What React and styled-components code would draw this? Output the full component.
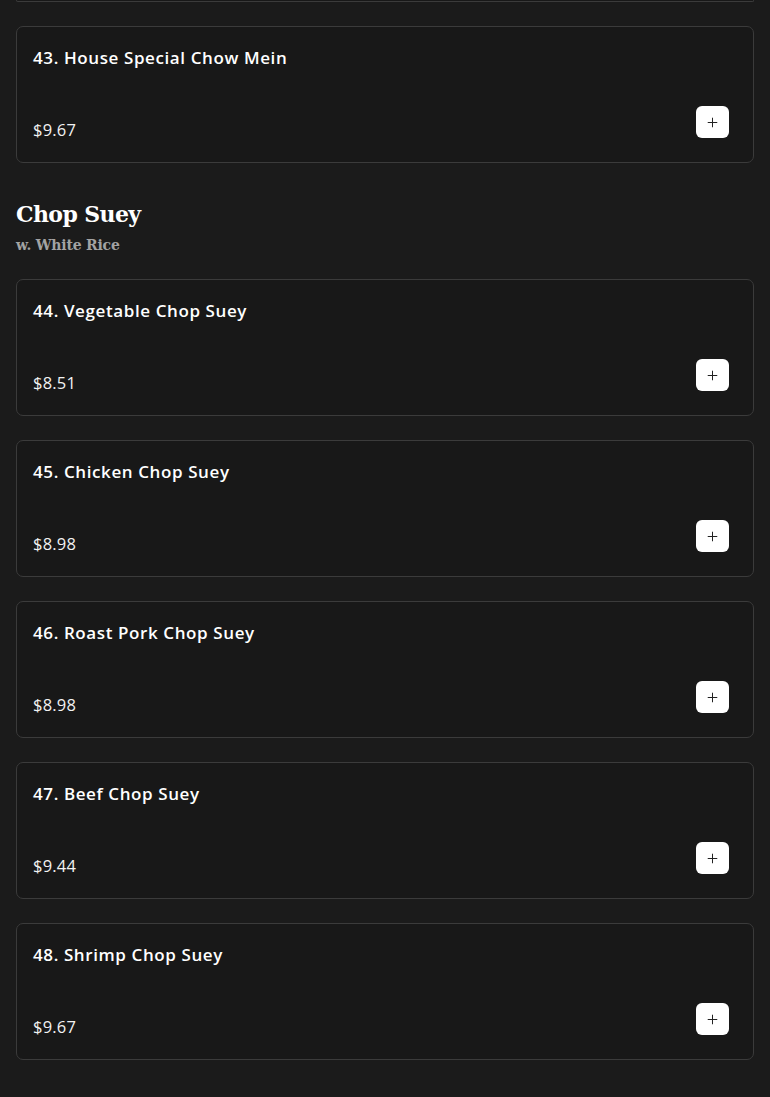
import React from "react";
import styled, { createGlobalStyle } from "styled-components";
import { Plus } from "lucide-react";

const Global = createGlobalStyle`
  html, body { margin: 0; padding: 0; background: #1b1b1b; }
  body { font-family: "Open Sans", "Liberation Sans", sans-serif; color: #fff; overflow: hidden; }
`;

const Page = styled.div`
  padding: 0 16px 40px;
`;

const List = styled.div`
  display: flex;
  flex-direction: column;
  gap: 24px;
`;

const Section = styled.section`
  margin-top: ${(p) => p.$gap || 0}px;
`;

const Header = styled.header`
  margin-bottom: 24px;
`;

const Heading = styled.h2`
  margin: 0;
  font-family: "DejaVu Serif", "Liberation Serif", serif;
  font-weight: 700;
  font-size: 22px;
  line-height: 30px;
  letter-spacing: -0.6px;
  color: #fff;
`;

const Sub = styled.div`
  margin-top: 6px;
  font-family: "DejaVu Serif", "Liberation Serif", serif;
  font-weight: 700;
  font-size: 14px;
  line-height: 20px;
  letter-spacing: -0.2px;
  color: #a3a3a3;
`;

const CardTail = styled.div`
  box-sizing: border-box;
  height: 2px;
  border: 1px solid #3b3b3b;
  border-top: none;
  border-radius: 0 0 7px 7px;
  background: #181818;
`;

const Card = styled.div`
  box-sizing: border-box;
  height: 137px;
  display: flex;
  flex-direction: column;
  justify-content: space-between;
  padding: 16px 24px 24px 16px;
  background: #181818;
  border: 1px solid #3b3b3b;
  border-radius: 7px;
`;

const Title = styled.div`
  font-size: 17px;
  font-weight: 600;
  line-height: 30px;
  letter-spacing: 0.6px;
  color: #fff;
`;

const Bottom = styled.div`
  display: flex;
  justify-content: space-between;
  align-items: flex-end;
`;

const Price = styled.div`
  font-size: 16.5px;
  line-height: 16px;
  letter-spacing: 0.2px;
  color: #f2f2f2;
`;

const AddButton = styled.button`
  width: 33px;
  height: 32px;
  border: none;
  border-radius: 6px;
  background: #fff;
  color: #222;
  display: flex;
  align-items: center;
  justify-content: center;
  padding: 0;
  cursor: pointer;
`;

const Item = ({ name, price }) => (
  <Card>
    <Title>{name}</Title>
    <Bottom>
      <Price>{price}</Price>
      <AddButton aria-label="Add">
        <Plus size={15} strokeWidth={1.6} />
      </AddButton>
    </Bottom>
  </Card>
);

const chowMein = [{ name: "43. House Special Chow Mein", price: "$9.67" }];

const chopSuey = [
  { name: "44. Vegetable Chop Suey", price: "$8.51" },
  { name: "45. Chicken Chop Suey", price: "$8.98" },
  { name: "46. Roast Pork Chop Suey", price: "$8.98" },
  { name: "47. Beef Chop Suey", price: "$9.44" },
  { name: "48. Shrimp Chop Suey", price: "$9.67" },
];

export default function App() {
  return (
    <>
      <Global />
      <Page>
        <Section>
          <List>
            <CardTail />
            {chowMein.map((i) => (
              <Item key={i.name} {...i} />
            ))}
          </List>
        </Section>
        <Section $gap={36}>
          <Header>
            <Heading>Chop Suey</Heading>
            <Sub>w. White Rice</Sub>
          </Header>
          <List>
            {chopSuey.map((i) => (
              <Item key={i.name} {...i} />
            ))}
          </List>
        </Section>
      </Page>
    </>
  );
}
